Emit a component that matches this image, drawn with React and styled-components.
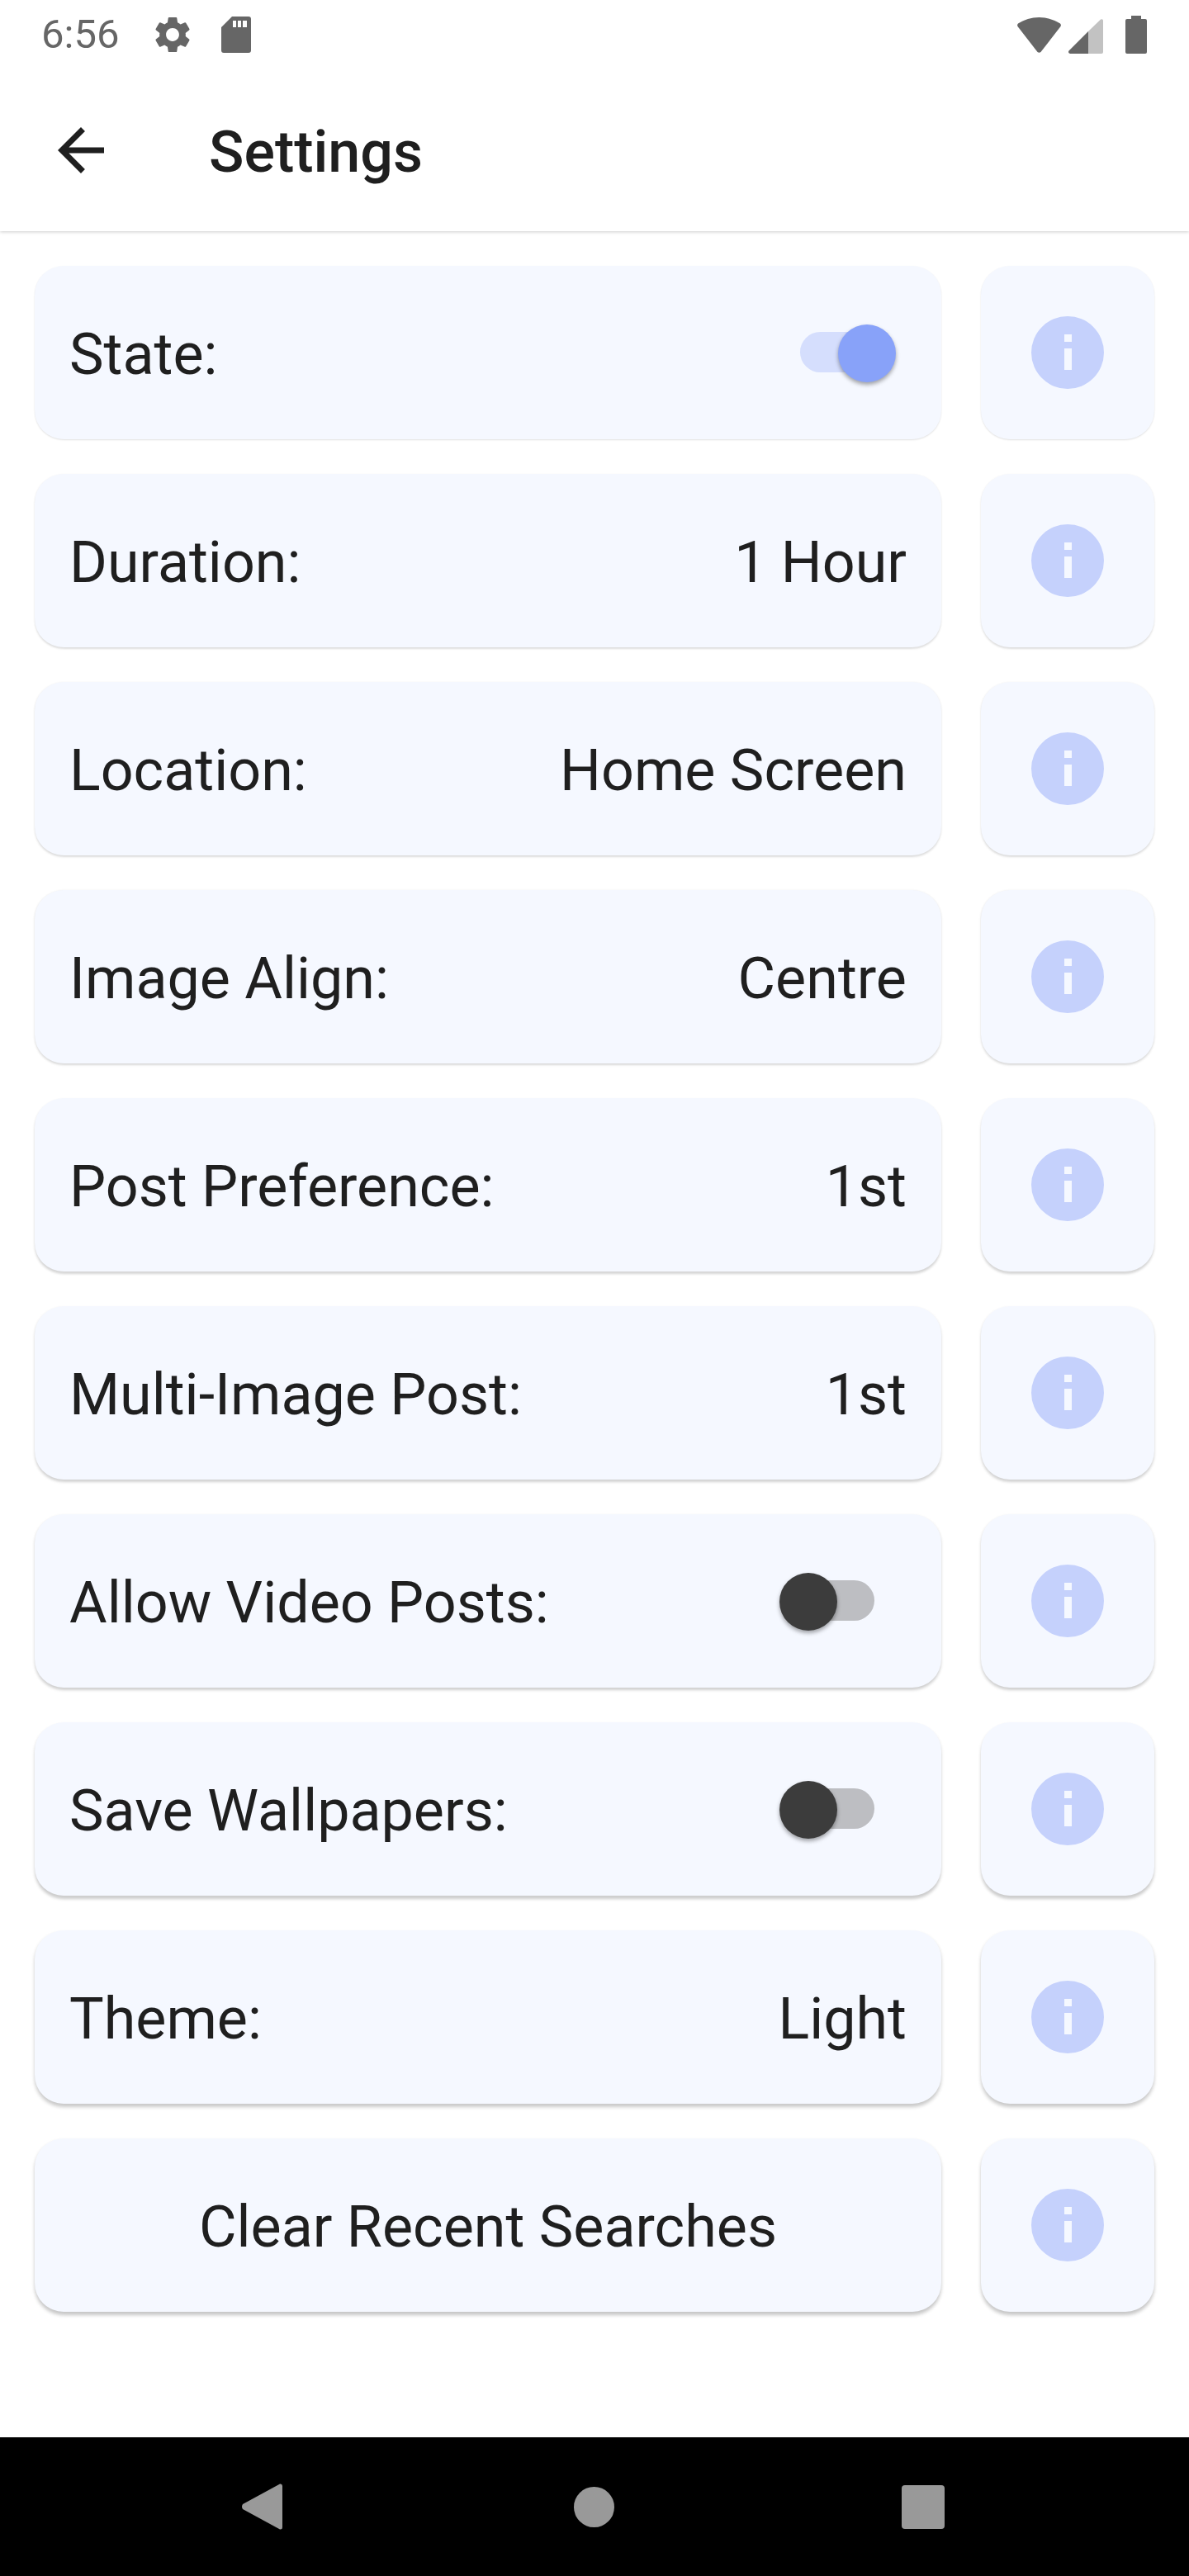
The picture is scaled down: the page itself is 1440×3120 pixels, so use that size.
import React from "react";
import styled, { createGlobalStyle } from "styled-components";

const GlobalStyle = createGlobalStyle`
  html, body {
    margin: 0;
    padding: 0;
    background: #fff;
    font-family: Roboto, "Noto Sans", sans-serif;
  }
`;

const Screen = styled.div`
  width: 1440px;
  height: 3120px;
  display: flex;
  flex-direction: column;
  background: #fff;
`;

const StatusBar = styled.div`
  height: 84px;
  display: flex;
  align-items: center;
  justify-content: space-between;
  padding: 0 51px 0 50px;
  color: #666;
`;

const StatusGroup = styled.div`
  display: flex;
  align-items: center;
`;

const Time = styled.span`
  font-size: 49px;
  line-height: 84px;
  width: 137px;
`;

const Header = styled.div`
  height: 196px;
  display: flex;
  align-items: center;
  padding-left: 56px;
  box-shadow: 0 1px 4px rgba(0, 0, 0, 0.2);
  clip-path: inset(0 0 -8px 0);
  position: relative;
`;

const Title = styled.h1`
  margin: 3px 0 0 113px;
  font-size: 70px;
  font-weight: 500;
  color: #1f1f1f;
`;

const List = styled.div`
  flex: 1;
  display: flex;
  flex-direction: column;
  gap: 42px;
  padding: 42px;
`;

const Row = styled.div`
  display: flex;
  gap: 48px;
`;

const Card = styled.div`
  height: 210px;
  box-sizing: border-box;
  border-radius: 35px;
  background: #f5f8ff;
  box-shadow: 0 ${(p) => 1 + p.$row * 0.3}px ${(p) => 2 + p.$row * 0.25}px
    rgba(0, 0, 0, ${(p) => 0.12 + p.$row * 0.012});
`;

const SettingCard = styled(Card)`
  flex: 1;
  display: flex;
  align-items: center;
  justify-content: ${(p) => (p.$center ? "center" : "space-between")};
  padding: 4px 42px 0;
  font-size: 70px;
  color: #1f1f1f;
`;

const InfoCard = styled(Card)`
  width: 210px;
  display: flex;
  align-items: center;
  justify-content: center;
`;

const InfoCircle = styled.div`
  width: 88px;
  height: 88px;
  margin-top: -1px;
  border-radius: 50%;
  background: #c5d1fc;
  display: flex;
  flex-direction: column;
  align-items: center;
  justify-content: center;
  gap: 8px;
`;

const InfoDot = styled.span`
  width: 9px;
  height: 9px;
  background: #f5f8ff;
`;

const InfoStem = styled.span`
  width: 9px;
  height: 26px;
  background: #f5f8ff;
`;

const Switch = styled.div`
  position: relative;
  width: 105px;
  height: 49px;
  margin: -5px ${(p) => (p.$on ? 24 : 39)}px 0 0;
  border-radius: 25px;
  background: ${(p) => (p.$on ? "#d5defd" : "#bdbec2")};
`;

const Thumb = styled.div`
  position: absolute;
  top: -9px;
  ${(p) => (p.$on ? "right: -11px;" : "left: -10px;")}
  width: 70px;
  height: 70px;
  border-radius: 50%;
  background: ${(p) => (p.$on ? "#88a2f9" : "#3c3c3c")};
  box-shadow: 0 3px 5px rgba(0, 0, 0, 0.35);
`;

const NavBar = styled.div`
  height: 168px;
  background: #000;
  display: flex;
  align-items: center;
  color: #999;
  padding-left: 293px;
`;

const NavCircle = styled.div`
  width: 49px;
  height: 49px;
  border-radius: 50%;
  background: #999;
  margin-left: 353px;
`;

const NavSquare = styled.div`
  width: 52px;
  height: 53px;
  border-radius: 4px;
  background: #999;
  margin-left: 348px;
`;

const GearIcon = () => (
  <svg width="44" height="44" viewBox="2 2 20 20" fill="currentColor">
    <path d="M19.14 12.94c.04-.3.06-.61.06-.94 0-.32-.02-.64-.07-.94l2.03-1.58c.18-.14.23-.41.12-.61l-1.92-3.32c-.12-.22-.37-.29-.59-.22l-2.39.96c-.5-.38-1.03-.7-1.62-.94l-.36-2.54c-.04-.24-.24-.41-.48-.41h-3.84c-.24 0-.43.17-.47.41l-.36 2.54c-.59.24-1.13.57-1.62.94l-2.39-.96c-.22-.08-.47 0-.59.22L2.74 8.87c-.12.21-.08.47.12.61l2.03 1.58c-.05.3-.09.63-.09.94s.02.64.07.94l-2.03 1.58c-.18.14-.23.41-.12.61l1.92 3.32c.12.22.37.29.59.22l2.39-.96c.5.38 1.03.7 1.62.94l.36 2.54c.05.24.24.41.48.41h3.84c.24 0 .44-.17.47-.41l.36-2.54c.59-.24 1.13-.56 1.62-.94l2.39.96c.22.08.47 0 .59-.22l1.92-3.32c.12-.22.07-.47-.12-.61l-2.01-1.58zM12 15.6c-1.98 0-3.6-1.62-3.6-3.6s1.62-3.6 3.6-3.6 3.6 1.62 3.6 3.6-1.62 3.6-3.6 3.6z" />
  </svg>
);

const SdIcon = () => (
  <svg width="36" height="44" viewBox="0 0 36 44" fill="currentColor" style={{ marginLeft: 37 }}>
    <path
      fillRule="evenodd"
      d="M13 0H33a3 3 0 0 1 3 3V41a3 3 0 0 1-3 3H3a3 3 0 0 1-3-3V13ZM14 5V13H18V5ZM20 5V13H24V5ZM26 5V13H31V5Z"
    />
  </svg>
);

const WifiIcon = () => (
  <svg width="53" height="43" viewBox="0 0 53 43" fill="currentColor">
    <path d="M26.5 0C36 0 45 3 52 7.5Q53.500 9 52.500 11L28.500 42Q26.500 43.500 24.500 42L.5 11Q-.5 9 1 7.500C8 3 17 0 26.500 0Z" />
  </svg>
);

const SignalIcon = () => (
  <svg width="42" height="42" viewBox="0 0 42 42" fill="currentColor" style={{ marginLeft: 9, marginTop: 4 }}>
    <path d="M24 15L39 0.500Q42 -.5 42 2V40Q42 42 40 42H24Z" opacity="0.4" />
    <path d="M24 15V42H2Q-1 41 .5 38.500Z" />
  </svg>
);

const BatteryIcon = () => (
  <svg width="26" height="46" viewBox="0 0 26 46" fill="currentColor" style={{ marginLeft: 27 }}>
    <path d="M7 0H19V4H24a2 2 0 0 1 2 2V44a2 2 0 0 1-2 2H2a2 2 0 0 1-2-2V6a2 2 0 0 1 2-2H7Z" />
  </svg>
);

const BackArrow = () => (
  <svg width="84" height="84" viewBox="0 0 24 24" fill="#1f1f1f">
    <path d="M20 11H7.830l5.590-5.590L12 4l-8 8 8 8 1.410-1.410L7.830 13H20v-2z" />
  </svg>
);

const NavBack = () => (
  <svg width="49" height="56" viewBox="0 0 49 56" fill="currentColor">
    <path d="M46 .5Q49 0 49 3V53Q49 56 46 55.500L1 31Q-1 28 1 25Z" />
  </svg>
);

const settings = [
  { label: "State:", toggle: true },
  { label: "Duration:", value: "1 Hour" },
  { label: "Location:", value: "Home Screen" },
  { label: "Image Align:", value: "Centre" },
  { label: "Post Preference:", value: "1st" },
  { label: "Multi-Image Post:", value: "1st" },
  { label: "Allow Video Posts:", toggle: false },
  { label: "Save Wallpapers:", toggle: false },
  { label: "Theme:", value: "Light" },
];

export default function App() {
  return (
    <Screen>
      <GlobalStyle />
      <StatusBar>
        <StatusGroup>
          <Time>6:56</Time>
          <GearIcon />
          <SdIcon />
        </StatusGroup>
        <StatusGroup>
          <WifiIcon />
          <SignalIcon />
          <BatteryIcon />
        </StatusGroup>
      </StatusBar>

      <Header>
        <BackArrow />
        <Title>Settings</Title>
      </Header>

      <List>
        {settings.map((item, i) => (
          <Row key={item.label}>
            <SettingCard $row={i}>
              <span>{item.label}</span>
              {item.value ? (
                <span>{item.value}</span>
              ) : (
                <Switch $on={item.toggle}>
                  <Thumb $on={item.toggle} />
                </Switch>
              )}
            </SettingCard>
            <InfoCard $row={i}>
              <InfoCircle>
                <InfoDot />
                <InfoStem />
              </InfoCircle>
            </InfoCard>
          </Row>
        ))}
        <Row>
          <SettingCard $row={9} $center>
            Clear Recent Searches
          </SettingCard>
          <InfoCard $row={9}>
            <InfoCircle>
              <InfoDot />
              <InfoStem />
            </InfoCircle>
          </InfoCard>
        </Row>
      </List>

      <NavBar>
        <NavBack />
        <NavCircle />
        <NavSquare />
      </NavBar>
    </Screen>
  );
}
